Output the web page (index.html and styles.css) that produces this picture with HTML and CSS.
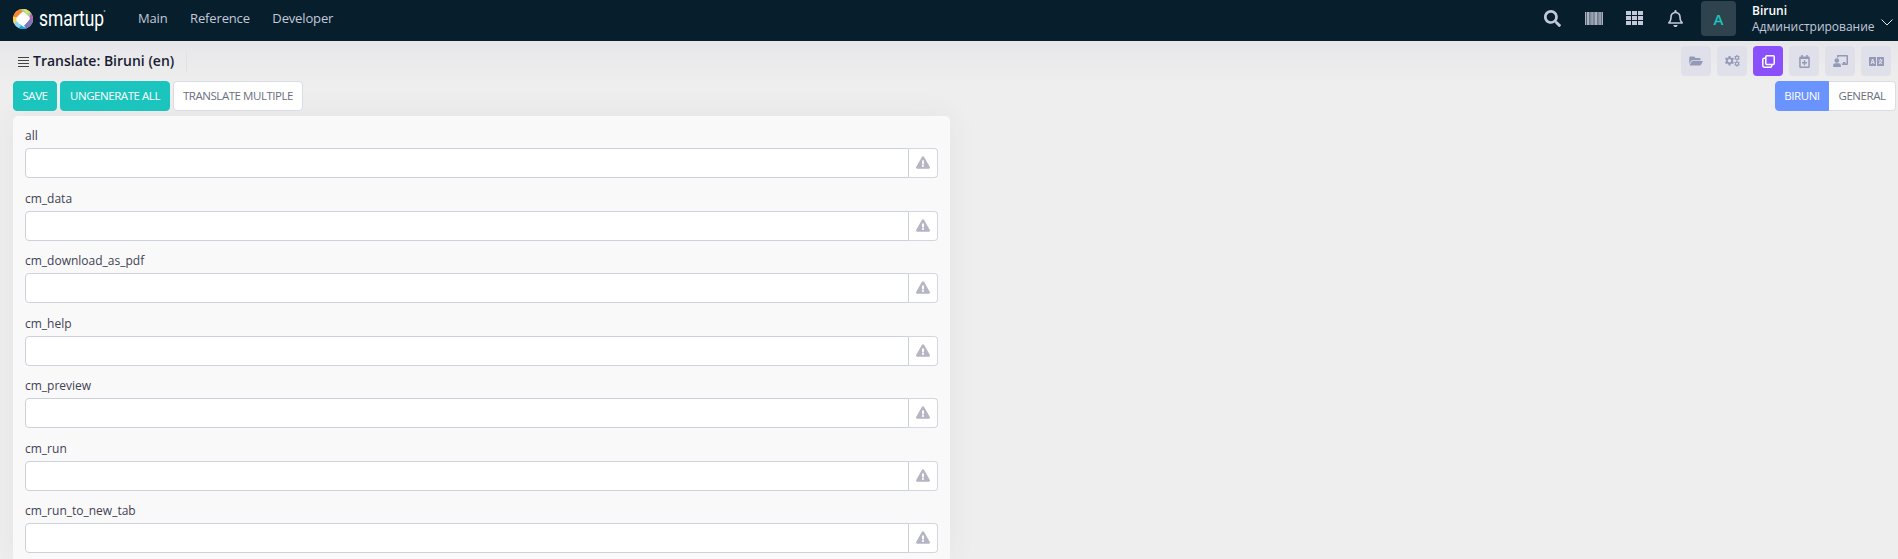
FILE: index.html
```html
<!DOCTYPE html>
<html lang="en">
<head>
<meta charset="utf-8">
<title>Translate: Biruni (en)</title>
<link rel="stylesheet" href="styles.css">
</head>
<body>
<svg class="sprite" aria-hidden="true">
  <symbol id="warn" viewBox="0 0 576 512"><path d="M569.500 440c18.500 32-4.700 72-41.600 72H48.100c-36.900 0-60-40-41.600-72L246.400 24c18.500-32 64.700-32 83.200 0zM288 354a46 46 0 1 0 0 92 46 46 0 1 0 0-92zm-43.700-165.300 7.400 136c.4 6.400 5.600 11.300 12 11.300h48.500c6.400 0 11.600-5 12-11.300l7.400-136c.4-6.900-5.100-12.700-12-12.700h-63.400c-6.900 0-12.300 5.800-11.900 12.700z"/></symbol>
  <symbol id="gear" viewBox="0 0 16 16"><path fill-rule="evenodd" d="M6.500 0h3l.4 2.200 1.700.9 2.100-.8 1.500 2.600-1.700 1.400v2.400l1.700 1.400-1.500 2.600-2.100-.8-1.700.9-.4 2.200h-3l-.4-2.200-1.700-.9-2.100.8L.8 10.100l1.700-1.400V6.300L.8 4.900l1.500-2.600 2.100.8 1.700-.9zM8 4.700a2.800 2.800 0 1 0 0 5.600 2.800 2.800 0 0 0 0-5.600z"/></symbol>
</svg>
<header class="topbar">
  <a class="brand">
    <svg class="brand-mark" viewBox="0 0 20 20">
      <circle cx="10" cy="10" r="10" fill="#fff"/>
      <path d="M.2 8A10 10 0 0 1 9 .1L10 3 3 9z" fill="#f58634"/>
      <path d="M8 .2A10 10 0 0 1 18.500 5L17 9 10 3z" fill="#a9d18e"/>
      <path d="M10 0A10 10 0 0 1 17 3L14 5z" fill="#d8e36a"/>
      <path d="M18 4A10 10 0 0 1 19.800 12L17 13 16.500 8z" fill="#b765a8"/>
      <path d="M19.700 12A10 10 0 0 1 13 19.500L11 16.500 17 10z" fill="#7d75b8"/>
      <path d="M14 19.200A10 10 0 0 1 5 18.700L6.500 15 10 17.500z" fill="#19a5de"/>
      <path d="M6 19.200A10 10 0 0 1 1 14L3.500 12 8 16.500z" fill="#8fd4ee"/>
      <path d="M1.200 14.500A10 10 0 0 1 .2 7.500L3.500 8.500 3.500 12z" fill="#fbd34d"/>
      <path d="M10 3.300Q12 3.200 16.500 8.500 17.500 10 11.500 16 10 17.300 8.500 16 2.500 10.500 3.500 9 8 3.200 10 3.300z" fill="#fff"/>
    </svg>
    <svg class="brand-name" viewBox="0 0 70 36"><text x="0" y="23" textLength="65" lengthAdjust="spacingAndGlyphs">smartup</text><circle cx="65.500" cy="8" r="1" /></svg>
  </a>
  <nav class="menu"><a>Main</a><a>Reference</a><a>Developer</a></nav>
  <div class="tools">
    <svg class="t-search" viewBox="0 0 512 512"><path d="M505 442.700 405.300 343c-4.500-4.500-10.600-7-17-7H372c27.600-35.300 44-79.700 44-128C416 93.100 322.900 0 208 0S0 93.100 0 208s93.100 208 208 208c48.300 0 92.700-16.400 128-44v16.300c0 6.400 2.500 12.500 7 17l99.700 99.700c9.400 9.400 24.600 9.400 33.900 0l28.300-28.300c9.400-9.400 9.400-24.600.1-34zM208 336c-70.700 0-128-57.200-128-128 0-70.700 57.200-128 128-128 70.700 0 128 57.200 128 128 0 70.700-57.200 128-128 128z"/></svg>
    <svg class="t-bars" viewBox="0 0 18 13"><path d="M0 0h1v13H0zM2 0h2v13H2zM4.700 0h.8v13h-.8zM6.300 0h1.500v13H6.300zM8.500 0h1v13h-1zM10 0h2v13h-2zM12.700 0h.8v13h-.8zM14.300 0h1.500v13h-1.500zM16.800 0H18v13h-1.200z"/><path opacity=".45" d="M0 0h18v13H0z"/></svg>
    <svg class="t-grid" viewBox="0 0 17 14"><path d="M0 0h5v4H0zM6 0h5v4H6zM12 0h5v4h-5zM0 5h5v4H0zM6 5h5v4H6zM12 5h5v4h-5zM0 10h5v4H0zM6 10h5v4H6zM12 10h5v4h-5z"/></svg>
    <svg class="t-bell" viewBox="0 0 448 512"><path d="M439.400 362.300c-19.300-20.800-55.500-52-55.500-154.300 0-77.700-54.500-139.900-127.900-155.200V32a32 32 0 1 0-64 0v20.800C118.600 68.100 64.100 130.300 64.100 208c0 102.300-36.200 133.500-55.500 154.300C2.600 368.700 0 376.500 0 384c.1 16.400 13 32 32.100 32h383.800c19.100 0 32-15.600 32.100-32 0-7.500-2.600-15.300-8.600-21.700zM67.500 368c21.200-28 44.400-74.300 44.500-159.400V208c0-61.900 50.100-112 112-112s112 50.100 112 112v.6c.1 85.100 23.300 131.500 44.500 159.400zM224 512c35.300 0 64-28.700 64-64H160c0 35.300 28.600 64 64 64z"/></svg>
    <span class="avatar">A</span>
    <div class="who"><b>Biruni</b><span>Администрирование</span></div>
    <svg class="t-chev" viewBox="0 0 12 7"><path d="M.5.500 6 6 11.500.500"/></svg>
  </div>
</header>

<section class="subhead">
  <div class="title">
    <svg class="lines" viewBox="0 0 11 10"><path d="M0 .5h11M0 3.500h11M0 6.500h11M0 9.500h11"/></svg>
    <h1>Translate: Biruni (en)</h1>
  </div>
  <div class="shortcuts">
    <a><svg class="s14" viewBox="0 0 576 512"><path d="M572.700 292.100 500.300 416.200A64 64 0 0 1 445 448H45c-18.500 0-30-20.100-20.700-36.100l72.400-124.200A64 64 0 0 1 152 256h400c18.500 0 30 20.100 20.700 36.100zM152 224h328v-48c0-26.500-21.500-48-48-48H272l-64-64H48C21.500 64 0 85.500 0 112v278l69-118.400A96 96 0 0 1 152 224z"/></svg></a>
    <a><svg class="s15" viewBox="0 0 30 24"><use href="#gear" x="-1" y="2" width="20" height="20"/><use href="#gear" x="18" y="0" width="12" height="12"/><use href="#gear" x="18" y="12" width="12" height="12"/></svg></a>
    <a class="on"><svg class="s13 stroke" viewBox="0 0 13 13"><rect x="3.800" y=".8" width="8.400" height="8.600" rx="1"/><path d="M3.500 3.300H2q-1.200 0-1.200 1.200v6.300q0 1.400 1.400 1.400h6.300q1.200 0 1.200-1.200V9.700"/></svg></a>
    <a><svg class="s13" viewBox="0 0 13 13"><path fill-rule="evenodd" d="M3.200 0h1.600v1.500h3.400V0h1.600v1.500h.7q1.300 0 1.300 1.300v8.700q0 1.500-1.300 1.500h-8Q1.200 13 1.200 11.500V2.800q0-1.300 1.300-1.300h.7zM2.700 4v7.500h7.600V4zM5.800 5.200h1.400V7H9v1.400H7.200v1.800H5.800V8.400H4V7h1.800z"/></svg></a>
    <a><svg class="s15" viewBox="0 0 15 12"><path d="M4.500 0H14q1 0 1 1v8q0 1-1 1H9.500q-.5-1-1.300-1.500H10V7h2.500v1.500h1V1.500h-8v1.300Q4.800 2.300 4 2.400V1q0-1 .5-1z"/><circle cx="3.800" cy="5.500" r="2.300"/><path d="M2.500 8.300h2.800Q8 8.500 8 11.300q0 .7-.7.700H.7q-.7 0-.7-.7 0-2.800 2.500-3z"/></svg></a>
    <a><svg class="s15 lang" viewBox="0 0 15 9"><path fill-rule="evenodd" d="M.8 0H7v9H.8Q0 9 0 8.200V.8Q0 0 .8 0zM8 0h6.200q.8 0 .8.800v7.400q0 .8-.8.800H8zM3 2 1.500 7h1.100l.3-1h1.500l.3 1h1.100L4.300 2zm.6 1.300.5 1.700h-.9zM11 1.700v1H9.300v.9h2.900Q12 4.500 11.400 5L10.700 4.300 10 4.900l.7.700-1.200.8.500.8 1.500-.9 1.400.9.500-.8-1.200-.8q.8-.8 1-2h.5v-.9H12v-1z"/></svg></a>
  </div>
</section>

<section class="actions">
  <div class="group">
    <button class="btn teal save">SAVE</button>
    <button class="btn teal ungenerate">UNGENERATE ALL</button>
    <button class="btn multiple">TRANSLATE MULTIPLE</button>
  </div>
  <div class="switch">
    <button class="btn blue">BIRUNI</button><button class="btn general">GENERAL</button>
  </div>
</section>

<main class="card">
  <div class="field"><label>all</label><div class="row"><input><span><svg><use href="#warn"/></svg></span></div></div>
  <div class="field"><label>cm_data</label><div class="row"><input><span><svg><use href="#warn"/></svg></span></div></div>
  <div class="field"><label>cm_download_as_pdf</label><div class="row"><input><span><svg><use href="#warn"/></svg></span></div></div>
  <div class="field"><label>cm_help</label><div class="row"><input><span><svg><use href="#warn"/></svg></span></div></div>
  <div class="field"><label>cm_preview</label><div class="row"><input><span><svg><use href="#warn"/></svg></span></div></div>
  <div class="field"><label>cm_run</label><div class="row"><input><span><svg><use href="#warn"/></svg></span></div></div>
  <div class="field"><label>cm_run_to_new_tab</label><div class="row"><input><span><svg><use href="#warn"/></svg></span></div></div>
</main>
</body>
</html>
```
FILE: styles.css
```css
* { box-sizing: border-box; }
body {
  margin: 0;
  height: 559px;
  overflow: hidden;
  font-family: "Open Sans", "Noto Sans", sans-serif;
  font-size: 12px;
  color: #3f4254;
  background: linear-gradient(#e7e7ea 41px, #eee 82px);
}
svg { display: block; flex: none; fill: currentColor; }
.sprite { display: none; }

.topbar {
  display: flex;
  align-items: center;
  height: 41px;
  padding: 0 5px 0 13px;
  background: #071f2d;
  color: #c4c8d8;
}
.brand { display: flex; align-items: center; width: 125px; }
.brand-mark { width: 20px; height: 20px; margin-top: -3px; }
.brand-name { width: 70px; height: 36px; margin: 0 0 0 6px; overflow: visible; fill: #fff; }
.brand-name text { font-family: Roboto, sans-serif; font-size: 22px; }
.brand-name circle { fill: #8995a0; }
.menu { display: flex; gap: 22.500px; font-size: 13px; letter-spacing: -.15px; margin-top: -5px; }
.tools { display: flex; align-items: center; margin-left: auto; height: 41px; }
.t-search { width: 17px; height: 17px; margin: -5px 24px 0 0; }
.t-bars { width: 18px; height: 13px; margin: -5px 23px 0 0; color: #aab1c1; }
.t-grid { width: 17px; height: 14px; margin: -5px 25px 0 0; }
.t-bell { width: 15px; height: 17px; margin: -5px 18px 0 0; }
.avatar {
  display: grid;
  place-items: center;
  width: 35px;
  height: 35px;
  margin: -4px 16px 0 0;
  border-radius: 4px;
  background: #2f434f;
  color: #1bc5bd;
  font-size: 15px;
  font-weight: 600;
}
.who { width: 123px; margin: -4px 6px 0 0; font-size: 12px; line-height: 16px; white-space: nowrap; }
.who b, .who span { display: block; }
.who b { font-weight: 600; color: #fff; }
.t-chev { width: 12px; height: 7px; margin-top: 3px; fill: none; stroke: #e4e8ee; }

.subhead { display: flex; justify-content: space-between; height: 40px; padding: 5px 7px 0 18px; }
.title {
  display: flex;
  align-items: center;
  height: 22px;
  margin-top: 4px;
  padding-right: 12px;
  border-right: 1px solid #e2e2e5;
}
.title h1 { margin: 0 0 0 4px; font-size: 14px; font-weight: 600; line-height: 20px; color: #181c32; }
.lines { width: 11px; height: 10px; margin-top: 1px; stroke: #444; stroke-width: 1; }
.shortcuts { display: flex; gap: 6px; }
.shortcuts a {
  display: grid;
  place-items: center;
  width: 30px;
  height: 30px;
  border-radius: 4px;
  background: #dfe0e9;
  color: #9499b7;
}
.shortcuts .on { background: #8950fc; color: #fff; }
.s13 { width: 13px; height: 13px; }
.s14 { width: 14px; height: 12px; }
.s15 { width: 15px; height: 12px; }
.lang { height: 9px; }
.stroke { fill: none; stroke: currentColor; stroke-width: 1.500; }

.actions { display: flex; justify-content: space-between; padding: 0 2px 0 13px; }
.group { display: flex; gap: 3px; }
.switch { display: flex; }
.btn {
  height: 30px;
  padding: 0;
  border: 1px solid #d9dde3;
  border-radius: 4px;
  background: #fff;
  color: #6c6f7c;
  font: 11.500px/18px "Open Sans", sans-serif;
  letter-spacing: -.45px;
  white-space: nowrap;
}
.save { width: 44px; }
.ungenerate { width: 110px; }
.multiple { width: 130px; }
.general { width: 67px; }
.teal { background: #1bc5bd; border-color: #1bc5bd; color: #fff; }
.blue { width: 54px; background: #6993ff; border-color: #6993ff; color: #fff; border-radius: 4px 0 0 4px; }
.switch .general { border-left: 0; border-radius: 0 4px 4px 0; }

.card {
  width: 937px;
  height: 443px;
  margin: 5px 0 0 13px;
  padding: 12px 12px 0;
  border-radius: 5px 5px 0 0;
  background: #f9f9f9;
  box-shadow: 0 0 30px rgba(82, 63, 105, .06);
}
.field { height: 62.500px; }
.field label { display: block; height: 20px; line-height: 16px; }
.row { display: flex; height: 30px; }
.row input {
  flex: 1;
  min-width: 0;
  border: 1px solid #cdd1da;
  border-radius: 4px 0 0 4px;
  background: #fff;
}
.row span {
  display: grid;
  place-items: center;
  width: 29px;
  padding-bottom: 1px;
  border: 1px solid #d3d6de;
  border-left: 0;
  border-radius: 0 4px 4px 0;
  background: #fff;
  color: #b5b5c3;
}
.row svg { width: 14px; height: 13px; }
```
